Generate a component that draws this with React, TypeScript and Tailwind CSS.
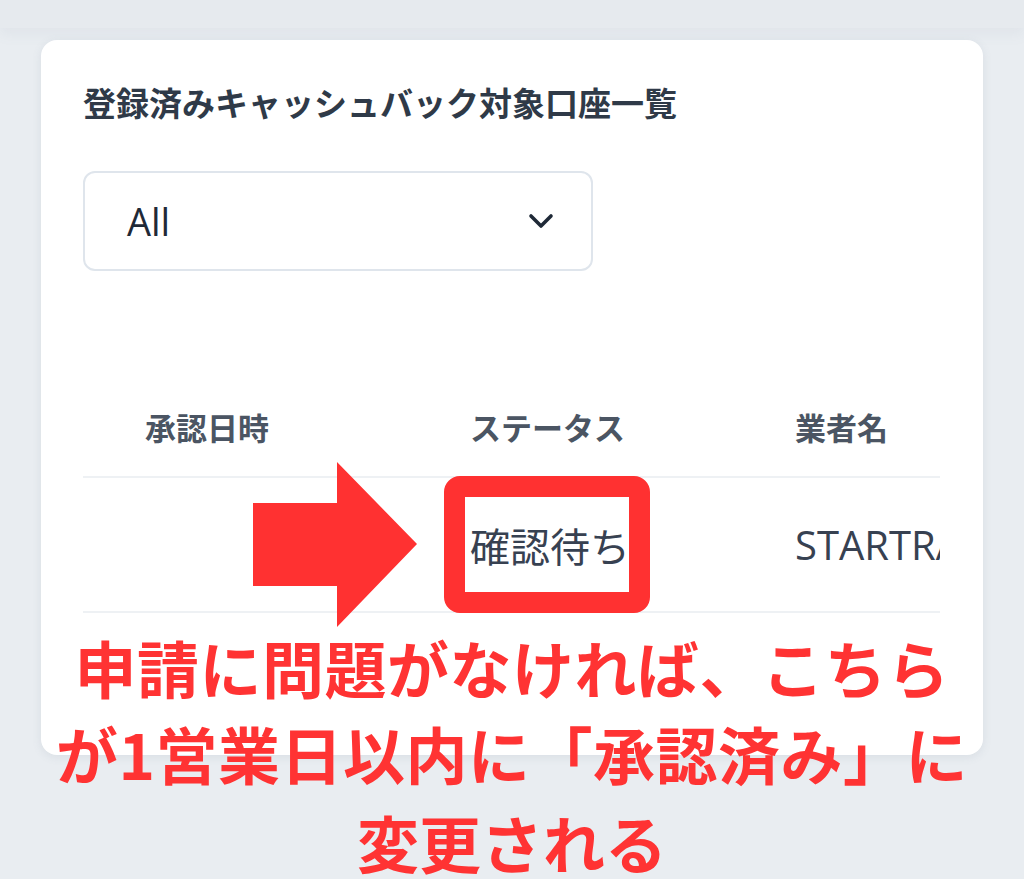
const font = { fontFamily: '"Open Sans", "Noto Sans CJK JP", sans-serif' };
const jp = { fontFamily: '"Noto Sans CJK JP", sans-serif' };

function Arrow() {
  return (
    <svg width="164" height="165" viewBox="0 0 164 165" className="absolute left-[253px] top-[462px]">
      <polygon points="0,41 84,41 84,0 164,82 84,165 84,124 0,124" fill="#ff3131" />
    </svg>
  );
}

export default function App() {
  return (
    <div className="relative h-[879px] w-[1024px] overflow-hidden bg-[#e9edf1]" style={font}>
      <div className="h-[28px] bg-[#e6eaee] shadow-[0_6px_14px_rgba(120,130,150,0.08)]" />

      <section className="ml-[41px] mt-[12px] h-[715px] w-[942px] rounded-[16px] bg-white px-[42px] pt-[42px] shadow-[0_2px_10px_rgba(100,116,139,0.12)]">
        <h1 className="text-[33px] font-semibold leading-[40px] text-[#2f3a48]" style={jp}>
          登録済みキャッシュバック対象口座一覧
        </h1>

        <div className="mt-[49px] flex h-[100px] w-[510px] items-center justify-between rounded-[12px] border-2 border-[#dfe5ec] pl-[42px] pr-[37px]">
          <span className="text-[38px] text-[#1f2937]">All</span>
          <svg width="26" height="16" viewBox="0 0 26 16" fill="none">
            <polyline points="3,3 13,13 23,3" stroke="#1f2937" strokeWidth="3.6" strokeLinecap="round" strokeLinejoin="round" />
          </svg>
        </div>

        <div className="mt-[107px] w-[857px] overflow-hidden">
          <div className="w-[1100px]">
            <div className="flex h-[100px] items-center border-b-2 border-[#eef1f4] text-[31px] font-bold text-[#4b5563]" style={jp}>
              <div className="w-[325px] pl-[62px]">承認日時</div>
              <div className="w-[325px] pl-[62px]">ステータス</div>
              <div className="w-[325px] pl-[62px]">業者名</div>
            </div>
            <div className="flex h-[135px] items-center border-b-2 border-[#eef1f4] text-[40px] text-[#374151]">
              <div className="w-[325px] pl-[62px]" />
              <div className="w-[325px] pl-[62px]" style={jp}>確認待ち</div>
              <div className="w-[325px] whitespace-nowrap pl-[62px]">STARTRADER</div>
            </div>
          </div>
        </div>
      </section>

      <Arrow />
      <div className="absolute left-[444px] top-[476px] h-[137px] w-[206px] rounded-[16px] border-[21px] border-[#ff3131]" />

      <div
        className="absolute left-0 top-[624px] w-[1024px] text-center text-[62px] font-bold leading-[86px] text-[#ff3333]"
        style={jp}
      >
        <div className="tracking-[0.5px]">申請に問題がなければ、こちら</div>
        <div className="tracking-[0.5px]">が1営業日以内に「承認済み」に</div>
        <div className="mt-[10px] leading-[72px]">変更される</div>
      </div>
    </div>
  );
}
